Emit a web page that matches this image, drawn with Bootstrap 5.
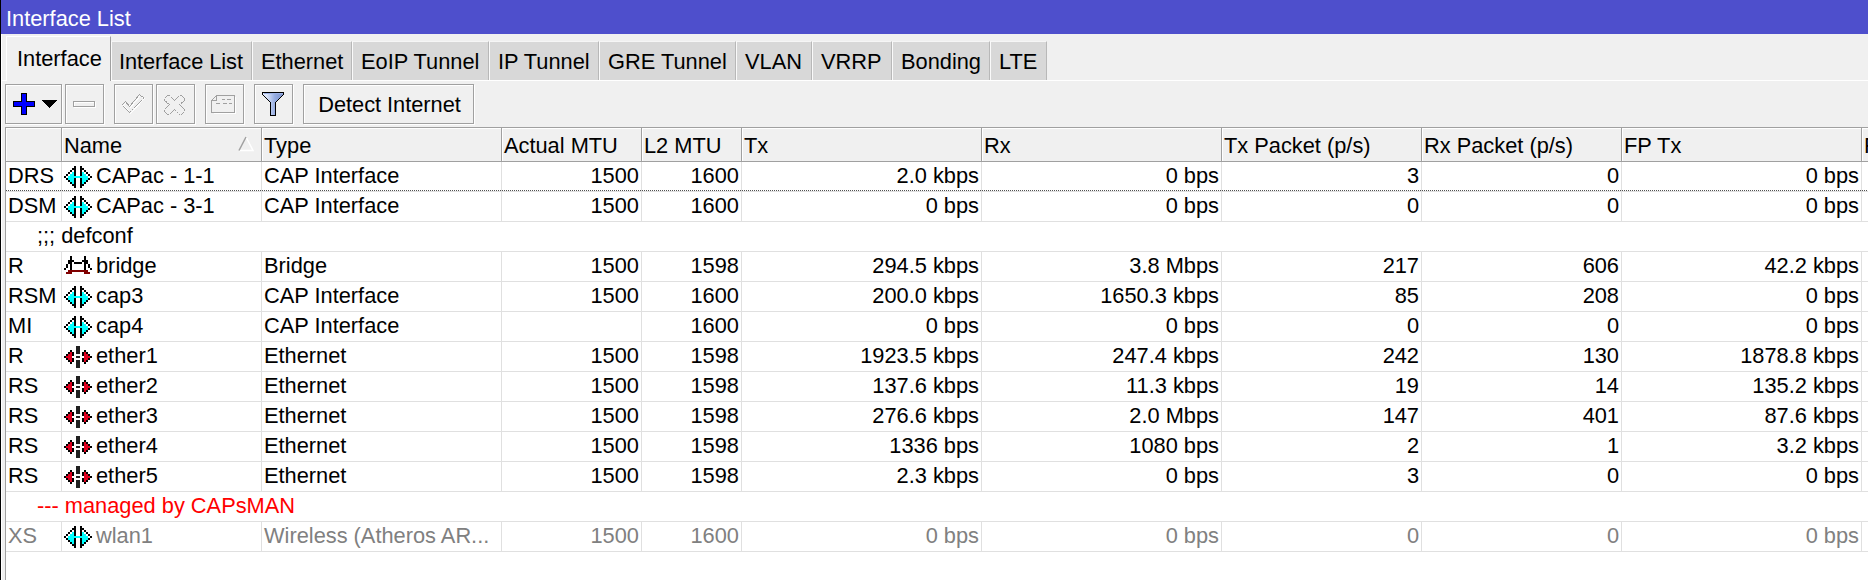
<!DOCTYPE html>
<html lang="en">
<head>
<meta charset="utf-8">
<title>Interface List</title>
<link href="https://cdn.jsdelivr.net/npm/bootstrap@5.3.0/dist/css/bootstrap.min.css" rel="stylesheet">
<style>
body{font-family:"Liberation Sans",Arial,sans-serif;font-size:21.8px;line-height:29px;color:#000;background:#f0f0f0;height:580px}
.win{height:580px;border-left:1px solid #000;background:#f0f0f0;box-shadow:inset 1px 0 #fff}
.titlebar{height:34px;background:#4e4fcc;color:#fff;padding:4px 0 0 5px;line-height:30px}
.tabs{height:47px;padding-left:5px;border-bottom:1px solid #fff}
.tabs .nav-link{height:39px;padding:0 8px;line-height:40px;color:#000;background:#d8d8d8;border:0;border-radius:0;border-top:1px solid #f6f6f6;border-right:1px solid #b8b8b8;border-left:1px solid #fafafa;white-space:nowrap;overflow:hidden}
.tabs .nav-link:nth-child(2){padding-left:7px;letter-spacing:-.06px}
.tabs .nav-link.active{height:45px;margin-bottom:-1px;background:#f0f0f0;border-top:1px solid #fff;border-right-color:#a0a0a0;border-left:1px solid #fff;line-height:43px;padding:0 10px}
.tools{height:46px;padding:3px 0 0 4px}
.tool{height:40px;width:39px;border:1px solid #a0a0a0;border-radius:0;padding:0;background:#f0f0f0;box-shadow:inset 1px 1px #fff,1px 1px #fff;color:#000;font-size:inherit;line-height:1}
.tool svg{display:block}
.grid-wrap{margin-left:4px;height:453px;border-left:1px solid #a0a0a0;border-top:1px solid #a0a0a0;background:#fff;overflow:hidden}
.iface{width:2055px;table-layout:fixed;border-collapse:separate;border-spacing:0}
.iface th{height:34px;padding:2px 2px 0;background:#f0f0f0;border-right:1px solid #a0a0a0;border-bottom:1px solid #a0a0a0;box-shadow:inset 1px 1px #fff;font-weight:400;line-height:31px;white-space:nowrap}
.iface td{height:30px;padding:0 2px 2px;line-height:27px;border-right:1px solid #e0e0e0;border-bottom:1px solid #e0e0e0;white-space:nowrap;overflow:hidden}
.iface .n{text-align:right}
.iface tr.focus-row td{background:repeating-linear-gradient(90deg,#505050 0 1px,#fff 1px 2px) bottom/100% 1px no-repeat}
.iface td.note{padding-left:31px}
.off td{color:#808080}
.ic{width:28px;height:22px;display:block;margin-top:4px;margin-bottom:-2px}
svg{shape-rendering:crispEdges}
</style>
</head>
<body class="overflow-hidden">
<div class="win d-flex flex-column">
<div class="titlebar">Interface List</div>
<nav class="nav tabs d-flex flex-nowrap align-items-end" id="tabs"></nav>
<div class="tools d-flex">
<button class="btn tool d-flex align-items-center" style="width:57px"><svg width="55" height="38"><path d="M15.500 8.500h5v8h8v5h-8v8h-5v-8h-8v-5h8z" fill="#00f" stroke="#000"/><path d="M36 15h15l-7.500 8z"/></svg></button>
<button class="btn tool" style="margin-left:3px"><svg width="37" height="38" fill="none"><path d="M8.500 17.500h21v5h-21z" stroke="#fff"/><path d="M7.500 16.500h21v5h-21z" stroke="#a0a0a0"/></svg></button>
<button class="btn tool" style="margin-left:10px"><svg width="37" height="38" fill="none"><path d="M8.500 20.500l3-3 4 5 10-12 4 3-14 15z" stroke="#fff"/><path d="M7.500 19.500l3-3 4 5 10-12 4 3v1l-14 14-7-7z" stroke="#a0a0a0" stroke-dasharray="2 .6"/></svg></button>
<button class="btn tool" style="margin-left:3px"><svg width="37" height="38" fill="none"><path d="M7.500 13.500l3-3h2l5 5 5-5h2l3 3v2l-5 4 5 5v2l-3 3h-2l-5-5-5 5h-2l-3-3v-2l5-5-5-4z" stroke="#a0a0a0" stroke-dasharray="2 .6"/></svg></button>
<button class="btn tool" style="margin-left:10px"><svg width="37" height="38" fill="none" stroke="#a0a0a0"><path d="M7.500 28.500h22M29.500 11.500v17" stroke="#fff"/><path d="M5.500 15.500l5-5h18v17h-23zM10.500 10.500v5h-5M16 14.500h3m2 0h4M10 18.500h4m3 0h4m2 0h3"/></svg></button>
<button class="btn tool" style="margin-left:10px"><svg width="37" height="38"><defs><linearGradient id="fg"><stop offset=".2" stop-color="#dce6fb"/><stop offset=".6" stop-color="#93aae0"/><stop offset="1" stop-color="#7b91ca"/></linearGradient></defs><path d="M7.500 7.500h21v2l-8 8v13h-5v-13l-8-8z" fill="url(#fg)" stroke="#000"/><path d="M9 8.500h19" stroke="#9cb1e5"/></svg></button>
<button class="btn tool" style="margin-left:10px;width:171px;padding-left:2px;line-height:39px;letter-spacing:-.03px">Detect Internet</button>
</div>
<div class="grid-wrap"><table class="iface"><colgroup id="cols"></colgroup><thead><tr id="head"></tr></thead><tbody id="body"></tbody></table></div>
</div>
<script src="https://cdn.jsdelivr.net/npm/bootstrap@5.3.0/dist/js/bootstrap.bundle.min.js"></script>
<script>
// Type icons: one character per 2px cell
const pix={
cap:`.....k..k.....
....kk..kk....
...k.k..k.k...
..k.ck..kc.k..
.k.cck..kcc.k.
k.cccccccccc.k
.kccck..kccck.
..kcck..kcck..
...kck..kck...
....kk..kk....
.....k..k.....`,
bridge:`...k......k...
...k......k...
..kkk....kkk..
..kk.kkkk.kk..
.k.k......k.k.
.k.k......k.k.
k..k......k..k
..rrrrrrrrrr..
.rrr......rrr.`,
eth:`......gg......
......gg......
...k..gg..k...
..kRk.gg.kRk..
.kRRk....kRRk.
kRRR..gg..RRRk
.kRRk....kRRk.
..kRk.gg.kRk..
...k..gg..k...
......gg......
......gg......`};
const inks={k:'#000',c:'#0ff',r:'#800000',R:'#e00020',g:'#202020'};
const icon=n=>`<svg class="ic" viewBox="0 0 14 11">${pix[n].split('\n').map((l,y)=>[...l].map((c,x)=>inks[c]?`<rect x="${x}" y="${y}" width="1" height="1" fill="${inks[c]}"/>`:'').join('')).join('')}</svg>`;
const tabs=[['Interface',105],['Interface List',141],['Ethernet',100],['EoIP Tunnel',137],['IP Tunnel',110],['GRE Tunnel',137],['VLAN',76],['VRRP',80],['Bonding',98],['LTE',57]];
document.getElementById('tabs').innerHTML=tabs.map((t,i)=>`<a class="nav-link${i?'':' active'}" style="width:${t[1]}px">${t[0]}</a>`).join('');
const cols=[['',56],['Name',200],['Type',240],['Actual MTU',140],['L2 MTU',100],['Tx',240],['Rx',240],['Tx Packet (p/s)',200],['Rx Packet (p/s)',200],['FP Tx',240],['FP Rx',199]];
document.getElementById('cols').innerHTML=cols.map(c=>`<col style="width:${c[1]}px">`).join('');
const sort='<svg width="17" height="16" fill="none" style="shape-rendering:auto;margin:6px 4px 0 0"><path d="M8 1l7 13.500H1" stroke="#fff" stroke-width="1.500"/><path d="M1 14.500L8 1" stroke="#a0a0a0" stroke-width="1.500"/></svg>';
document.getElementById('head').innerHTML=cols.map(c=>c[0]=='Name'?`<th><div class="d-flex justify-content-between align-items-start"><span>Name</span>${sort}</div></th>`:`<th>${c[0]}</th>`).join('');
const rows=`DRS|cap|CAPac - 1-1|CAP Interface|1500|1600|2.0 kbps|0 bps|3|0|0 bps
DSM|cap|CAPac - 3-1|CAP Interface|1500|1600|0 bps|0 bps|0|0|0 bps
;;; defconf
R|bridge|bridge|Bridge|1500|1598|294.5 kbps|3.8 Mbps|217|606|42.2 kbps
RSM|cap|cap3|CAP Interface|1500|1600|200.0 kbps|1650.3 kbps|85|208|0 bps
MI|cap|cap4|CAP Interface||1600|0 bps|0 bps|0|0|0 bps
R|eth|ether1|Ethernet|1500|1598|1923.5 kbps|247.4 kbps|242|130|1878.8 kbps
RS|eth|ether2|Ethernet|1500|1598|137.6 kbps|11.3 kbps|19|14|135.2 kbps
RS|eth|ether3|Ethernet|1500|1598|276.6 kbps|2.0 Mbps|147|401|87.6 kbps
RS|eth|ether4|Ethernet|1500|1598|1336 bps|1080 bps|2|1|3.2 kbps
RS|eth|ether5|Ethernet|1500|1598|2.3 kbps|0 bps|3|0|0 bps
--- managed by CAPsMAN
XS|cap|wlan1|Wireless (Atheros AR...|1500|1600|0 bps|0 bps|0|0|0 bps`.split('\n');
document.getElementById('body').innerHTML=rows.map((r,i)=>{const f=r.split('|');
if(f.length<2)return `<tr><td colspan="11" class="note"${r[0]=='-'?' style="color:red"':''}>${r}</td></tr>`;
return `<tr class="${i==0?'focus-row':f[0]=='XS'?'off':''}"><td>${f[0]}</td><td><div class="d-flex align-items-start">${icon(f[1])}<span style="margin-left:4px">${f[2]}</span></div></td><td>${f[3]}</td>${f.slice(4).map(v=>`<td class="n">${v}</td>`).join('')}<td></td></tr>`}).join('');
</script>
</body>
</html>
